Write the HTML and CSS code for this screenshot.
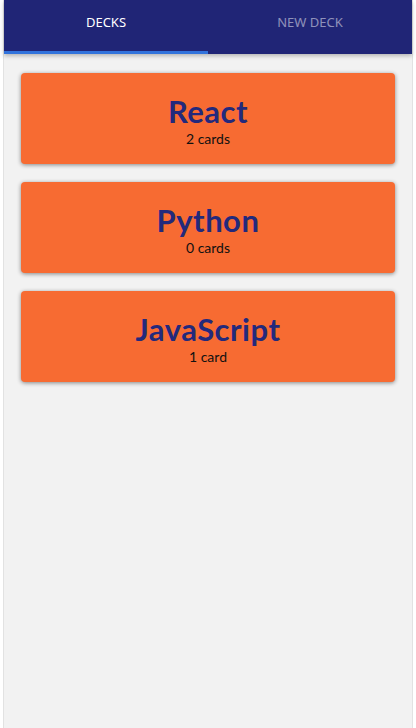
FILE: index.html
```html
<!DOCTYPE html>
<html>
<head>
<meta charset="utf-8">
<link rel="stylesheet" href="styles.css">
</head>
<body>
<div class="app">
  <div class="tabs">
    <div class="tab active">DECKS</div>
    <div class="tab">NEW DECK</div>
  </div>
  <div class="list">
    <div class="deck">
      <div class="deck-title">React</div>
      <div class="deck-count">2 cards</div>
    </div>
    <div class="deck">
      <div class="deck-title">Python</div>
      <div class="deck-count">0 cards</div>
    </div>
    <div class="deck">
      <div class="deck-title">JavaScript</div>
      <div class="deck-count">1 card</div>
    </div>
  </div>
</div>
</body>
</html>
```
FILE: styles.css
```css
html, body {
  margin: 0;
  padding: 0;
  height: 100%;
  background: #ffffff;
}
body {
  font-family: "Noto Sans", "Open Sans", sans-serif;
}
.app {
  margin: 0 3px;
  height: 100%;
  background: #f2f2f2;
  border-left: 1px solid #e2e2e2;
  border-right: 1px solid #e2e2e2;
  box-sizing: border-box;
}
.tabs {
  display: flex;
  height: 54px;
  background: #202576;
  box-shadow: 0 2px 4px rgba(0,0,0,0.25);
  position: relative;
}
.tab {
  flex: 1;
  display: flex;
  align-items: center;
  justify-content: center;
  padding-bottom: 10px;
  box-sizing: border-box;
  font-size: 13px;
  color: rgba(255,255,255,0.5);
}
.tab.active {
  color: #ffffff;
  border-bottom: 3px solid #3273dc;
  padding-bottom: 7px;
}
.list {
  display: flex;
  flex-direction: column;
  gap: 18px;
  padding: 19px 17px 0 17px;
}
.deck {
  height: 91px;
  background: #f76b32;
  border-radius: 4px;
  box-shadow: 0 1px 4px rgba(0,0,0,0.45);
  display: flex;
  flex-direction: column;
  align-items: center;
  justify-content: center;
  padding-top: 2px;
  box-sizing: border-box;
}
.deck-title {
  font-family: Lato, "Noto Sans", sans-serif;
  font-size: 31px;
  font-weight: 700;
  letter-spacing: 0.5px;
  color: #23297c;
  line-height: 36px;
}
.deck-count {
  margin-top: 1px;
  font-family: Lato, "Noto Sans", sans-serif;
  font-size: 14px;
  color: #111111;
  line-height: 17px;
}
```
